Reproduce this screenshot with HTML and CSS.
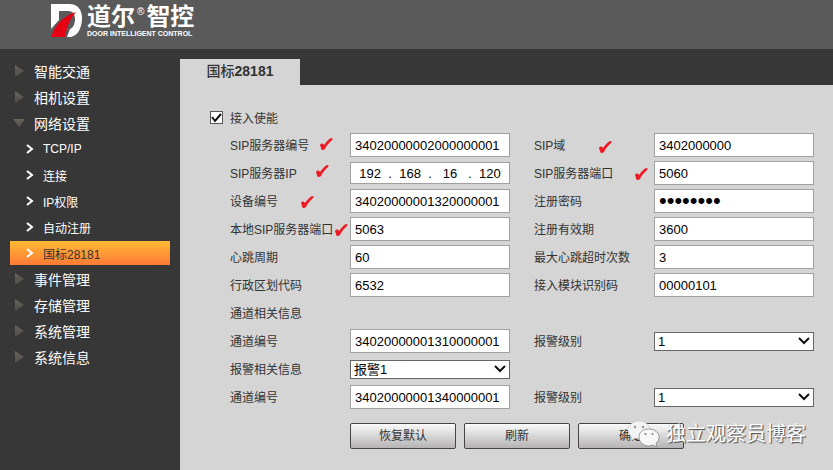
FILE: index.html
```html
<!doctype html>
<html lang="zh-CN">
<head>
  <meta charset="utf-8">
  <title>国标28181</title>
  <link rel="stylesheet" href="styles.css">
</head>
<body>
  <header class="header">
    <svg class="logo" viewBox="0 0 32 34" aria-hidden="true">
      <path fill="#fff" d="M0 0h18c9 0 13 6 13 14 0 11-5 19-13 19h-2l3-8c3-1 5-5 5-10 0-5-2-8-7-8H8v9L0 25z"/>
      <path fill="#e60012" d="M0 33C4 21 12 12 25 8 19 15 16 22 14 33z"/>
    </svg>
    <div class="brand">
      <div class="brand-name">道尔<sup>®</sup>智控</div>
      <div class="brand-en">DOOR INTELLIGENT CONTROL</div>
    </div>
  </header>

  <div class="page">
    <nav class="menu">
      <a class="group" href="#">智能交通</a>
      <a class="group" href="#">相机设置</a>
      <a class="group open" href="#">网络设置</a>
      <a class="item" href="#"><svg viewBox="0 0 8 10"><path d="M1 1l5 4-5 4"/></svg>TCP/IP</a>
      <a class="item" href="#"><svg viewBox="0 0 8 10"><path d="M1 1l5 4-5 4"/></svg>连接</a>
      <a class="item" href="#"><svg viewBox="0 0 8 10"><path d="M1 1l5 4-5 4"/></svg>IP权限</a>
      <a class="item" href="#"><svg viewBox="0 0 8 10"><path d="M1 1l5 4-5 4"/></svg>自动注册</a>
      <a class="item active" href="#"><svg viewBox="0 0 8 10"><path d="M1 1l5 4-5 4"/></svg>国标28181</a>
      <a class="group" href="#">事件管理</a>
      <a class="group" href="#">存储管理</a>
      <a class="group" href="#">系统管理</a>
      <a class="group" href="#">系统信息</a>
    </nav>

    <main class="main">
      <div class="tabs"><a class="tab" href="#">国标<b>28181</b></a></div>
      <form class="panel">
        <label class="enable"><input type="checkbox" checked>接入使能</label>

        <div class="fields">
          <label for="sip-id">SIP服务器编号</label>
          <input id="sip-id" type="text" value="34020000002000000001">
          <label for="sip-domain">SIP域</label>
          <input id="sip-domain" type="text" value="3402000000">

          <label for="ip1">SIP服务器IP</label>
          <div class="ip">
            <input id="ip1" type="text" value="192">.<input type="text" value="168" aria-label="IP 2">.<input type="text" value="16" aria-label="IP 3">.<input type="text" value="120" aria-label="IP 4">
          </div>
          <label for="sip-port">SIP服务器端口</label>
          <input id="sip-port" type="text" value="5060">

          <label for="device-id">设备编号</label>
          <input id="device-id" type="text" value="34020000001320000001">
          <label for="password">注册密码</label>
          <input id="password" type="password" value="12345678">

          <label for="local-port">本地SIP服务器端口</label>
          <input id="local-port" type="text" value="5063">
          <label for="expires">注册有效期</label>
          <input id="expires" type="text" value="3600">

          <label for="heartbeat">心跳周期</label>
          <input id="heartbeat" type="text" value="60">
          <label for="timeouts">最大心跳超时次数</label>
          <input id="timeouts" type="text" value="3">

          <label for="region">行政区划代码</label>
          <input id="region" type="text" value="6532">
          <label for="module">接入模块识别码</label>
          <input id="module" type="text" value="00000101">

          <div class="section">通道相关信息</div>

          <label for="channel-id">通道编号</label>
          <input id="channel-id" type="text" value="34020000001310000001">
          <label for="channel-level">报警级别</label>
          <select id="channel-level"><option>1</option></select>

          <label class="start" for="alarm">报警相关信息</label>
          <select id="alarm"><option>报警1</option></select>

          <label class="start" for="alarm-id">通道编号</label>
          <input id="alarm-id" type="text" value="34020000001340000001">
          <label for="alarm-level">报警级别</label>
          <select id="alarm-level"><option>1</option></select>
        </div>

        <div class="buttons">
          <button type="button">恢复默认</button>
          <button type="button">刷新</button>
          <button type="button">确定</button>
        </div>

        <!-- red check marks drawn over the form -->
        <svg class="marks" width="480" height="160" aria-hidden="true">
          <defs><path id="mark" d="M0 7C1 5 3 5 4 7 6 4 9 1 11 0c2 0 2 1 1 2C9 5 6 8 5 11c-2 2-4 1-4-1z"/></defs>
          <use href="#mark" x="140" y="53"/>
          <use href="#mark" x="136" y="80"/>
          <use href="#mark" x="121" y="111"/>
          <use href="#mark" x="155" y="139"/>
          <use href="#mark" x="419" y="56"/>
          <use href="#mark" x="455" y="83"/>
        </svg>
      </form>
    </main>
  </div>

  <div class="watermark">
    <svg viewBox="0 0 32 28" aria-hidden="true">
      <path fill="#f4f4f4" stroke="#bbb" stroke-width=".5" d="M11 1c6 0 11 4 11 9s-5 9-11 9l-4-1-4 3 1-4C1 15 0 13 0 10c0-5 5-9 11-9z"/>
      <circle cx="7" cy="7" r="1.3" fill="#999"/><circle cx="15" cy="7" r="1.3" fill="#999"/>
      <path fill="#f8f8f8" stroke="#777" stroke-width=".7" d="M21 9c6 0 10 4 10 8 0 3-1 5-3 6l1 4-4-2-4 1c-6 0-10-4-10-9s4-8 10-8z"/>
      <circle cx="17.5" cy="14" r="1.1" fill="#888"/><circle cx="24.5" cy="14" r="1.1" fill="#888"/>
    </svg>
    独立观察员博客
  </div>
</body>
</html>
```

FILE: styles.css
```css
* {
  box-sizing: border-box;
}

body {
  margin: 0;
  min-height: 100vh;
  display: flex;
  flex-direction: column;
  position: relative;
  background: #373737;
  color: #333;
  font-family: "Liberation Sans", "Noto Sans CJK SC", sans-serif;
  font-size: 12px;
}

a {
  color: inherit;
  text-decoration: none;
}

input, select, button {
  margin: 0;
  font-family: inherit;
}

.header {
  display: flex;
  gap: 4px;
  height: 49px;
  padding: 4px 51px;
  background: #5a5a5a;
  color: #fff;
}

.logo {
  width: 32px;
  height: 34px;
}

.brand-name {
  font-size: 24px;
  line-height: 25px;
  font-weight: bold;
  white-space: nowrap;
}

.brand-name sup {
  font-size: 10px;
  line-height: 10px;
  font-weight: normal;
  vertical-align: 10px;
  margin: 0 2px;
}

.brand-en {
  font-size: 7px;
  line-height: 10px;
  font-weight: bold;
  white-space: nowrap;
}

.page {
  flex: 1;
  display: flex;
}

.menu {
  width: 180px;
  padding: 10px;
  display: flex;
  flex-direction: column;
  gap: 2px;
  color: #fff;
}

.group, .item {
  display: flex;
  align-items: center;
  height: 24px;
}

.group {
  gap: 10px;
  padding-left: 5px;
  font-size: 14px;
}

.group::before {
  content: "";
  width: 9px;
  height: 12px;
  background: linear-gradient(#68655f, #4c4c48);
  clip-path: polygon(0 0, 100% 50%, 0 100%);
}

.group.open {
  padding-left: 3px;
  gap: 9px;
}

.group.open::before {
  width: 12px;
  height: 9px;
  clip-path: polygon(0 0, 100% 0, 50% 100%);
}

.item {
  gap: 9px;
  padding-left: 16px;
}

.item svg {
  width: 8px;
  height: 10px;
  fill: none;
  stroke: #fff;
  stroke-width: 2;
}

.item.active {
  background: linear-gradient(#ffb935, #ff7a36);
  color: #333;
}

.main {
  flex: 1;
  display: flex;
  flex-direction: column;
  padding-top: 10px;
}

.tabs {
  display: flex;
}

.tab {
  width: 120px;
  height: 26px;
  background: #d5d5d5;
  font-size: 14px;
  line-height: 25px;
  font-weight: 500;
  text-align: center;
}

.panel {
  flex: 1;
  position: relative;
  padding: 18px 19px 20px 30px;
  background: #d5d5d5;
}

.enable {
  display: flex;
  align-items: center;
  gap: 7px;
  height: 28px;
}

.enable input {
  appearance: none;
  width: 13px;
  height: 13px;
  border: 1px solid #555;
  background: #fff url("data:image/svg+xml,%3Csvg xmlns='http://www.w3.org/2000/svg' viewBox='0 0 11 11'%3E%3Cpath d='M1 5l3 4 6-7' fill='none' stroke='%23111' stroke-width='2'/%3E%3C/svg%3E");
}

.fields {
  display: grid;
  grid-template-columns: 120px 1fr 144px 1fr;
  grid-auto-rows: 28px;
  align-items: center;
  padding-left: 20px;
}

.fields label, .section {
  padding-bottom: 2px;
}

.fields label:nth-of-type(even) {
  padding-left: 24px;
}

.fields .start {
  grid-column: 1;
}

.fields label.start:nth-of-type(n) {
  padding-left: 0;
}

.fields .start + input + label {
  padding-left: 24px;
}

.section {
  grid-column: 1 / -1;
}

.fields input, .ip {
  width: 100%;
  min-width: 0;
  height: 24px;
  padding: 0 4px;
  border: 1px solid #a0a0a0;
  background: #fff;
  color: #000;
  font-size: 13px;
}

.fields input[type="password"] {
  font-size: 22px;
}

.fields .ip {
  display: flex;
  align-items: center;
  height: 22px;
  padding: 0 1px;
}

.fields .ip input {
  flex: 1;
  height: 20px;
  padding: 0;
  border: 0;
  text-align: center;
}

.fields select {
  appearance: none;
  width: 100%;
  height: 19px;
  padding: 0 20px 0 3px;
  border: 1px solid #666;
  border-radius: 0;
  background: #fff url("data:image/svg+xml,%3Csvg xmlns='http://www.w3.org/2000/svg' viewBox='0 0 12 8'%3E%3Cpath d='M1 1l5 5 5-5' fill='none' stroke='%23111' stroke-width='2'/%3E%3C/svg%3E") no-repeat right 3px center / 12px 8px;
  color: #000;
  font-size: 13px;
  line-height: 17px;
}

.buttons {
  display: flex;
  gap: 8px;
  padding: 12px 0 0 140px;
}

.buttons button {
  width: 106px;
  height: 26px;
  padding: 0 0 3px;
  border: 1px solid #444;
  border-radius: 2px;
  background: linear-gradient(#fafafa, #b5b3b3);
  color: #333;
  font-size: 12px;
}

.marks {
  position: absolute;
  left: 0;
  top: 0;
  fill: #ed1c24;
  pointer-events: none;
}

.watermark {
  position: absolute;
  right: 27px;
  bottom: 22px;
  display: flex;
  align-items: center;
  gap: 6px;
  color: #fff;
  font-size: 20px;
  line-height: 28px;
  text-shadow: 1px 1px 1px #444;
}

.watermark svg {
  width: 32px;
  height: 28px;
}
```
